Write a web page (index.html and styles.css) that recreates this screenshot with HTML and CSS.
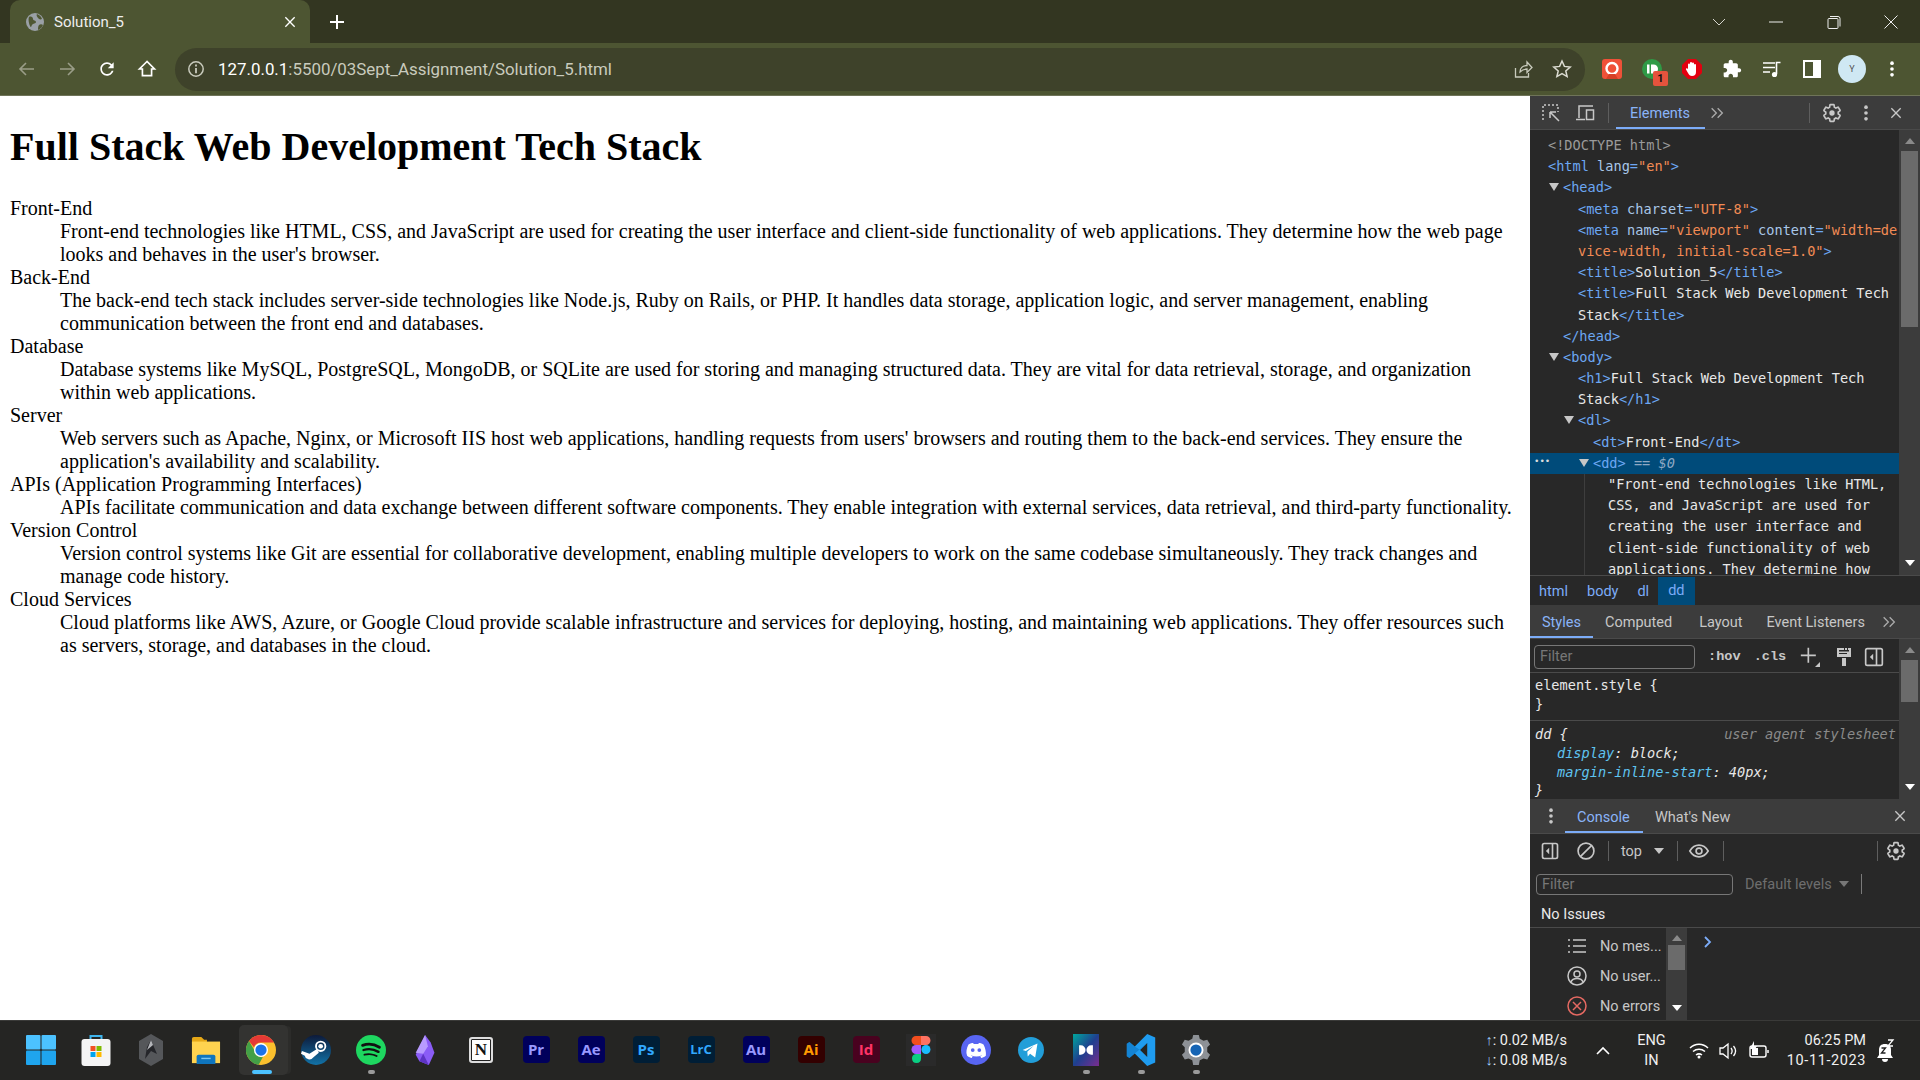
FILE: index.html
```html
<!doctype html>
<html lang="en">
<head>
<meta charset="utf-8">
<title>Solution_5</title>
<link rel="stylesheet" href="styles.css">
</head>
<body>
<svg class="defs" width="0" height="0">
	<symbol id="gear" viewBox="0 0 24 24"><path fill="none" stroke="currentColor" stroke-width="2" d="M19.43 12.98c.04-.32.07-.64.07-.98s-.03-.66-.07-.98l2.11-1.65c.19-.15.24-.42.12-.64l-2-3.46c-.12-.22-.39-.3-.61-.22l-2.49 1c-.52-.4-1.08-.73-1.69-.98l-.38-2.65C14.46 2.18 14.25 2 14 2h-4c-.25 0-.46.18-.49.42l-.38 2.65c-.61.25-1.17.59-1.69.98l-2.49-1c-.23-.09-.49 0-.61.22l-2 3.46c-.13.22-.07.49.12.64l2.11 1.65c-.04.32-.07.65-.07.98s.03.66.07.98l-2.11 1.65c-.19.15-.24.42-.12.64l2 3.46c.12.22.39.3.61.22l2.49-1c.52.4 1.08.73 1.69.98l.38 2.65c.03.24.24.42.49.42h4c.25 0 .46-.18.49-.42l.38-2.65c.61-.25 1.17-.59 1.69-.98l2.49 1c.23.09.49 0 .61-.22l2-3.46c.12-.22.07-.49-.12-.64l-2.11-1.65z"/><circle cx="12" cy="12" r="3.2" fill="currentColor"/></symbol>
	<symbol id="close" viewBox="0 0 24 24"><path fill="none" stroke="currentColor" stroke-width="2" d="M5 5l14 14M19 5L5 19"/></symbol>
	<symbol id="dots" viewBox="0 0 24 24"><g fill="currentColor"><circle cx="12" cy="5" r="2.2"/><circle cx="12" cy="12" r="2.2"/><circle cx="12" cy="19" r="2.2"/></g></symbol>
	<symbol id="more" viewBox="0 0 24 24"><path fill="none" stroke="currentColor" stroke-width="2" d="M4 5l7 7-7 7M13 5l7 7-7 7"/></symbol>
	<symbol id="dock" viewBox="0 0 24 24"><rect x="3" y="3" width="18" height="18" rx="2" fill="none" stroke="currentColor" stroke-width="2"/><path fill="none" stroke="currentColor" stroke-width="2" d="M15 3v18"/><path fill="currentColor" d="M11 8v8l-4-4z"/></symbol>
</svg>

<header class="tabstrip">
	<div class="tab">
		<svg class="favicon" viewBox="0 0 20 20"><circle cx="10" cy="10" r="9" fill="#9aa0a6"/><path fill="#4f5733" d="M4 5c2-1 4 0 4 2s3 1 3 3-3 1-4 3-1 3-2 1-2-7-1-9zM12 2c2 1 4 2 5 5-2 1-3 0-4-1s-2-3-1-4zM14 13c1-1 3-1 4 0-1 2-2 4-5 5 0-2 0-4 1-5z"/></svg>
		<span class="tab-title">Solution_5</span>
		<svg class="tab-close" viewBox="0 0 24 24"><use href="#close"/></svg>
	</div>
	<svg class="newtab" viewBox="0 0 20 20"><path fill="none" stroke="#fff" stroke-width="2" d="M10 3v14M3 10h14"/></svg>
	<div class="winctl">
		<span class="winbtn"><svg width="14" height="8" viewBox="0 0 14 8"><path fill="none" stroke="#d6d6ce" d="M1 1l6 6 6-6"/></svg></span>
		<span class="winbtn"><svg width="14" height="2" viewBox="0 0 14 2"><path stroke="#eee" d="M0 1h14"/></svg></span>
		<span class="winbtn"><svg width="14" height="14" viewBox="0 0 14 14"><path fill="none" stroke="#eee" d="M3 1.5h8a2 2 0 012 2v8M1 4.5a1 1 0 011-1h8a1 1 0 011 1v8a1 1 0 01-1 1H2a1 1 0 01-1-1z"/></svg></span>
		<span class="winbtn"><svg width="14" height="14" viewBox="0 0 14 14"><path fill="none" stroke="#eee" d="M.5.5l13 13M13.5.5l-13 13"/></svg></span>
	</div>
</header>

<nav class="toolbar">
	<span class="tbtn"><svg viewBox="0 0 20 20"><path fill="none" stroke="#9a9d88" stroke-width="1.6" d="M17 10H3M9 4l-6 6 6 6"/></svg></span>
	<span class="tbtn"><svg viewBox="0 0 20 20"><path fill="none" stroke="#9a9d88" stroke-width="1.6" d="M3 10h14M11 4l6 6-6 6"/></svg></span>
	<span class="tbtn"><svg viewBox="0 0 24 24"><path fill="#fff" d="M17.65 6.35C16.2 4.9 14.21 4 12 4c-4.42 0-7.99 3.58-7.99 8s3.57 8 7.99 8c3.73 0 6.84-2.55 7.73-6h-2.08c-.82 2.33-3.04 4-5.65 4-3.31 0-6-2.69-6-6s2.69-6 6-6c1.66 0 3.14.69 4.22 1.78L13 11h7V4l-2.35 2.35z"/></svg></span>
	<span class="tbtn"><svg viewBox="0 0 24 24"><path fill="none" stroke="#fff" stroke-width="2" d="M12 3L3 12h3.5v8h11v-8H21z"/></svg></span>
	<div class="omnibox">
		<svg class="info" viewBox="0 0 18 18"><circle cx="9" cy="9" r="7.2" fill="none" stroke="#c9cbbd" stroke-width="1.5"/><path stroke="#c9cbbd" stroke-width="1.8" d="M9 8v5.2M9 4.6v1.8"/></svg>
		<span class="url"><b>127.0.0.1</b>:5500/03Sept_Assignment/Solution_5.html</span>
		<span class="omni-btn"><svg viewBox="0 0 20 20"><path fill="none" stroke="#c9cbbd" stroke-width="1.3" d="M2.5 9v9h13v-4M7 13c0-4 3-6.500 7-6.500V3l5 5.500-5 5V10c-3 0-5 1-7 3z"/></svg></span>
		<span class="omni-btn"><svg viewBox="0 0 20 20"><path fill="none" stroke="#dcdcd2" stroke-width="1.5" d="M10 2l2.400 5.400 5.800.6-4.400 3.900 1.300 5.700L10 14.700 4.900 17.600l1.300-5.700L1.800 8l5.800-.6z"/></svg></span>
	</div>
	<span class="tbtn"><svg viewBox="0 0 20 20"><rect width="20" height="20" rx="3" fill="#ef5138"/><circle cx="10" cy="9.500" r="5.500" fill="none" stroke="#fff" stroke-width="2.400"/><path fill="#d63e25" d="M4 20l3-5h6l3 5z"/></svg></span>
	<span class="tbtn ext-badge"><svg viewBox="0 0 20 20"><circle cx="10" cy="10" r="10" fill="#2f9a46"/><rect x="5" y="5.500" width="2.500" height="9" fill="#fff"/><path fill="#fff" d="M9 5.500h2.500a4.500 4.500 0 010 9H9z"/></svg><span class="badge">1</span></span>
	<span class="tbtn"><svg viewBox="0 0 20 20"><path fill="#e2000f" d="M6 0h8l6 6v8l-6 6H6l-6-6V6z"/><path fill="#fff" d="M6 9V5.500a1 1 0 012 0V4a1 1 0 012 0v.5a1 1 0 012 0V6a1 1 0 012 0v7a4 4 0 01-4 4H10c-2 0-3-1-4-3L4 10.500c-.5-1 1-2 2-.5z"/></svg></span>
	<span class="tbtn"><svg viewBox="0 0 24 24"><path fill="#fff" d="M20.5 11H19V7c0-1.100-.9-2-2-2h-4V3.500C13 2.120 11.880 1 10.500 1S8 2.120 8 3.500V5H4c-1.100 0-1.990.9-1.990 2v3.800H3.500c1.490 0 2.700 1.210 2.700 2.700s-1.210 2.700-2.700 2.700H2V20c0 1.100.9 2 2 2h3.800v-1.500c0-1.490 1.210-2.700 2.700-2.700 1.490 0 2.700 1.210 2.700 2.700V22H17c1.100 0 2-.9 2-2v-4h1.500c1.380 0 2.500-1.120 2.500-2.500S21.880 11 20.500 11z"/></svg></span>
	<span class="tbtn"><svg viewBox="0 0 20 20"><path fill="none" stroke="#fff" stroke-width="1.600" d="M1 4h12M1 8.500h12M1 13h7"/><path fill="none" stroke="#fff" stroke-width="1.600" d="M14.500 15V3.500h4"/><circle cx="12.500" cy="15.500" r="2.600" fill="#fff"/></svg></span>
	<span class="tbtn"><svg viewBox="0 0 20 20"><rect x="2" y="2" width="16" height="16" fill="none" stroke="#fff" stroke-width="2"/><rect x="11" y="2" width="7" height="16" fill="#fff"/></svg></span>
	<span class="tbtn"><span class="avatar">Y</span></span>
	<span class="tbtn"><svg viewBox="0 0 24 24"><use href="#dots" color="#fff"/></svg></span>
</nav>

<div class="main">
	<main class="page">
		<h1>Full Stack Web Development Tech Stack</h1>
		<dl>
			<dt>Front-End</dt>
			<dd>Front-end technologies like HTML, CSS, and JavaScript are used for creating the user interface and client-side functionality of web applications. They determine how the web page looks and behaves in the user's browser.</dd>
			<dt>Back-End</dt>
			<dd>The back-end tech stack includes server-side technologies like Node.js, Ruby on Rails, or PHP. It handles data storage, application logic, and server management, enabling communication between the front end and databases.</dd>
			<dt>Database</dt>
			<dd>Database systems like MySQL, PostgreSQL, MongoDB, or SQLite are used for storing and managing structured data. They are vital for data retrieval, storage, and organization within web applications.</dd>
			<dt>Server</dt>
			<dd>Web servers such as Apache, Nginx, or Microsoft IIS host web applications, handling requests from users' browsers and routing them to the back-end services. They ensure the application's availability and scalability.</dd>
			<dt>APIs (Application Programming Interfaces)</dt>
			<dd>APIs facilitate communication and data exchange between different software components. They enable integration with external services, data retrieval, and third-party functionality.</dd>
			<dt>Version Control</dt>
			<dd>Version control systems like Git are essential for collaborative development, enabling multiple developers to work on the same codebase simultaneously. They track changes and manage code history.</dd>
			<dt>Cloud Services</dt>
			<dd>Cloud platforms like AWS, Azure, or Google Cloud provide scalable infrastructure and services for deploying, hosting, and maintaining web applications. They offer resources such as servers, storage, and databases in the cloud.</dd>
		</dl>
	</main>

	<aside class="devtools">
		<div class="dt-bar">
			<span class="dt-icon first"><svg viewBox="0 0 20 20"><path fill="none" stroke="#c7c7c7" stroke-width="1.500" stroke-dasharray="2 2" d="M2 17V2h15v7"/><path fill="none" stroke="#c7c7c7" stroke-width="1.500" d="M9 9h6M9 9v6M9 9l9 9"/></svg></span>
			<span class="dt-icon"><svg viewBox="0 0 20 20"><path fill="none" stroke="#c7c7c7" stroke-width="1.500" d="M4 15V3h14M1 16.500h9"/><rect x="11.500" y="7" width="7" height="9.500" fill="none" stroke="#c7c7c7" stroke-width="1.500"/></svg></span>
			<span class="dt-div"></span>
			<span class="dt-tab on elements-tab">Elements</span>
			<span class="dt-more"><svg viewBox="0 0 24 24"><use href="#more"/></svg></span>
			<span class="grow"></span>
			<span class="dt-div"></span>
			<span class="dt-icon"><svg viewBox="0 0 24 24"><use href="#gear"/></svg></span>
			<span class="dt-icon"><svg viewBox="0 0 24 24"><use href="#dots"/></svg></span>
			<span class="dt-icon narrow"><svg viewBox="0 0 24 24"><use href="#close"/></svg></span>
		</div>

		<div class="elements">
			<div class="tree">
				<div class="ln"><span class="gray">&lt;!DOCTYPE html&gt;</span></div>
				<div class="ln"><span class="tag">&lt;html</span> <span class="attr">lang</span><span class="tag">=</span><span class="val">"en"</span><span class="tag">&gt;</span></div>
				<div class="ln i1"><i class="tri"></i><span class="tag">&lt;head&gt;</span></div>
				<div class="ln i2"><span class="tag">&lt;meta</span> <span class="attr">charset</span><span class="tag">=</span><span class="val">"UTF-8"</span><span class="tag">&gt;</span></div>
				<div class="ln i2"><span class="tag">&lt;meta</span> <span class="attr">name</span><span class="tag">=</span><span class="val">"viewport"</span> <span class="attr">content</span><span class="tag">=</span><span class="val">"width=de</span></div>
				<div class="ln i2"><span class="val">vice-width, initial-scale=1.0"</span><span class="tag">&gt;</span></div>
				<div class="ln i2"><span class="tag">&lt;title&gt;</span>Solution_5<span class="tag">&lt;/title&gt;</span></div>
				<div class="ln i2"><span class="tag">&lt;title&gt;</span>Full Stack Web Development Tech</div>
				<div class="ln i2">Stack<span class="tag">&lt;/title&gt;</span></div>
				<div class="ln i1"><span class="tag">&lt;/head&gt;</span></div>
				<div class="ln i1"><i class="tri"></i><span class="tag">&lt;body&gt;</span></div>
				<div class="ln i2"><span class="tag">&lt;h1&gt;</span>Full Stack Web Development Tech</div>
				<div class="ln i2">Stack<span class="tag">&lt;/h1&gt;</span></div>
				<div class="ln i2"><i class="tri"></i><span class="tag">&lt;dl&gt;</span></div>
				<div class="ln i3"><span class="tag">&lt;dt&gt;</span>Front-End<span class="tag">&lt;/dt&gt;</span></div>
				<div class="ln i3 sel"><span class="ell">•••</span><i class="tri"></i><span class="tag">&lt;dd&gt;</span> <span class="eq">== <em>$0</em></span></div>
				<div class="guide">
					<div class="ln">"Front-end technologies like HTML,</div>
					<div class="ln">CSS, and JavaScript are used for</div>
					<div class="ln">creating the user interface and</div>
					<div class="ln">client-side functionality of web</div>
					<div class="ln">applications. They determine how</div>
				</div>
			</div>
			<div class="sb">
				<i class="up"></i>
				<i class="thumb thumb-el"></i>
				<i class="down"></i>
			</div>
		</div>

		<div class="crumbs">
			<span>html</span><span>body</span><span>dl</span><span class="crumb-on">dd</span>
		</div>

		<div class="dt-bar tabs2">
			<span class="dt-tab on styles-tab">Styles</span>
			<span class="dt-tab">Computed</span>
			<span class="dt-tab layout-tab">Layout</span>
			<span class="dt-tab">Event Listeners</span>
			<span class="dt-more"><svg viewBox="0 0 24 24"><use href="#more"/></svg></span>
		</div>

		<div class="styles">
			<div class="styles-body">
				<div class="filter-row">
					<span class="filter">Filter</span>
					<span class="pill-txt hov">:hov</span>
					<span class="pill-txt cls">.cls</span>
					<svg class="mini plus" viewBox="0 0 24 24"><path fill="none" stroke="currentColor" stroke-width="2" d="M10 1v18M1 10h18"/><path fill="currentColor" d="M24 18v6h-6z"/></svg>
					<svg class="mini paint" viewBox="0 0 20 20"><path fill="currentColor" d="M3 1h14v9H3zM8 11h4v8H8z"/><path fill="#282828" d="M5 3h10v1.500H5zM10 1h1v2h-1zM13 1h1v2h-1zM5 6h8v1H5z"/></svg>
					<svg class="mini" viewBox="0 0 24 24"><rect x="2" y="2" width="20" height="20" rx="2" fill="none" stroke="currentColor" stroke-width="2"/><path fill="none" stroke="currentColor" stroke-width="2" d="M15 2v20"/><path fill="currentColor" d="M11 8v8l-4-4z"/></svg>
				</div>
				<div class="rule first-rule">
					<div class="code">element.style {</div>
					<div class="code">}</div>
				</div>
				<div class="rule">
					<div class="code it ua-row"><span>dd {</span><span class="ua">user agent stylesheet</span></div>
					<div class="code it decl"><span class="prop">display</span>: block;</div>
					<div class="code it decl"><span class="prop">margin-inline-start</span>: 40px;</div>
					<div class="code it">}</div>
				</div>
			</div>
			<div class="sb">
				<i class="up"></i>
				<i class="thumb thumb-st"></i>
				<i class="down"></i>
			</div>
		</div>

		<div class="dt-bar console-bar">
			<span class="dt-icon drawer-dots"><svg viewBox="0 0 24 24"><use href="#dots"/></svg></span>
			<span class="dt-tab on console-tab">Console</span>
			<span class="dt-tab">What's New</span>
			<span class="grow"></span>
			<span class="dt-icon narrow"><svg viewBox="0 0 24 24"><use href="#close"/></svg></span>
		</div>

		<div class="con-tools">
			<svg class="con-ic" viewBox="0 0 24 24"><use href="#dock"/></svg>
			<svg class="con-ic" viewBox="0 0 24 24"><circle cx="12" cy="12" r="9.500" fill="none" stroke="currentColor" stroke-width="2"/><path stroke="currentColor" stroke-width="2" d="M5.500 18.500l13-13"/></svg>
			<span class="dt-div"></span>
			<span class="ctx">top</span><i class="down small"></i>
			<span class="dt-div after-ctx"></span>
			<svg class="con-ic eye" viewBox="0 0 24 24"><path fill="none" stroke="currentColor" stroke-width="2" d="M1 12c3-5 7-7 11-7s8 2 11 7c-3 5-7 7-11 7s-8-2-11-7z"/><circle cx="12" cy="12" r="3.500" fill="none" stroke="currentColor" stroke-width="2"/></svg>
			<span class="dt-div"></span>
			<span class="grow"></span>
			<span class="dt-div"></span>
			<svg class="con-ic gear-ic" viewBox="0 0 24 24"><use href="#gear"/></svg>
		</div>

		<div class="con-filter">
			<span class="filter wide">Filter</span>
			<span class="levels">Default levels</span><i class="down small dim"></i>
			<span class="dt-div bright"></span>
		</div>

		<div class="issues">No Issues</div>

		<div class="con-body">
			<div class="con-side">
				<div class="msg"><svg viewBox="0 0 20 20"><path fill="none" stroke="currentColor" stroke-width="1.600" d="M6 4h13M6 10h13M6 16h13"/><path stroke="currentColor" stroke-width="1.600" d="M1 4h2M1 10h2M1 16h2"/></svg><span>No mes...</span></div>
				<div class="msg"><svg viewBox="0 0 20 20"><circle cx="10" cy="10" r="9" fill="none" stroke="currentColor" stroke-width="1.500"/><circle cx="10" cy="8" r="3" fill="none" stroke="currentColor" stroke-width="1.500"/><path fill="none" stroke="currentColor" stroke-width="1.500" d="M4 16c1-3 3-3.500 6-3.500s5 .5 6 3.500"/></svg><span>No user...</span></div>
				<div class="msg"><svg viewBox="0 0 20 20"><circle cx="10" cy="10" r="9" fill="none" stroke="#e46962" stroke-width="1.500"/><path stroke="#e46962" stroke-width="1.500" d="M6 6l8 8M14 6l-8 8"/></svg><span>No errors</span></div>
			</div>
			<div class="sb">
				<i class="up"></i>
				<i class="thumb thumb-con"></i>
				<i class="down"></i>
			</div>
			<div class="prompt"><svg width="8" height="12" viewBox="0 0 8 12"><path fill="none" stroke="#7cacf8" stroke-width="1.800" d="M1 1l5 5-5 5"/></svg></div>
		</div>
	</aside>
</div>

<footer class="taskbar">
	<div class="tb-item"><svg class="app" viewBox="0 0 29 29"><g fill="#4cc2ff"><rect width="14" height="14" rx="1"/><rect x="15" width="14" height="14" rx="1"/></g><g fill="#1fa5ee"><rect y="15" width="14" height="14" rx="1"/><rect x="15" y="15" width="14" height="14" rx="1"/></g></svg></div>
	<div class="tb-item"><svg class="app" viewBox="0 0 29 32"><path fill="none" stroke="#3fb5ee" stroke-width="2" d="M9 8V2h11v6"/><rect y="5" width="29" height="27" rx="3" fill="#f4f4f4"/><rect x="9" y="12" width="5" height="5" fill="#f25022"/><rect x="15" y="12" width="5" height="5" fill="#7fba00"/><rect x="9" y="18" width="5" height="5" fill="#00a4ef"/><rect x="15" y="18" width="5" height="5" fill="#ffb900"/></svg></div>
	<div class="tb-item"><svg class="app" viewBox="0 0 26 32"><path fill="#55575a" d="M13 0l12 7v18l-12 7-12-7V7z"/><path fill="#25262a" d="M13 6l6 14-6-3-6 8 2-12z"/><path fill="#b4b6ba" d="M13 6l2 5-6 5z"/></svg></div>
	<div class="tb-item"><svg class="app" viewBox="0 0 32 32"><path fill="#e6a817" d="M1 4a2 2 0 012-2h8l3 3h3v4H1z"/><path fill="#ffd34f" d="M1 7h30v23H1z"/><path fill="#0f75bd" d="M6 23a2 2 0 012-2h16a2 2 0 012 2v8H6z"/><path stroke="#7cc6f2" stroke-width="1.500" d="M11 25h10"/></svg></div>
	<div class="tb-item chrome-item"><span class="hover-box"></span><svg class="app" viewBox="0 0 32 32"><circle cx="16" cy="16" r="16" fill="#fbc02d"/><path fill="#e53935" d="M16 0a16 16 0 0113.900 8H16a8 8 0 00-7.500 5L3.200 6.300A16 16 0 0116 0z"/><path fill="#43a047" d="M3.200 6.300L10 18a7 7 0 008 5.500L13.500 31.800A16 16 0 013.200 6.300z"/><circle cx="16" cy="16" r="7.500" fill="#fff"/><circle cx="16" cy="16" r="6" fill="#1a73e8"/></svg><i class="pip blue"></i></div>
	<div class="tb-item"><svg class="app" viewBox="0 0 32 32"><defs><linearGradient id="st" x1="0" y1="0" x2="0" y2="1"><stop offset="0" stop-color="#0d1a3a"/><stop offset="1" stop-color="#1273a8"/></linearGradient></defs><circle cx="16" cy="16" r="16" fill="url(#st)"/><circle cx="21" cy="12" r="5" fill="none" stroke="#fff" stroke-width="2"/><circle cx="21" cy="12" r="2.500" fill="#fff"/><path fill="#fff" d="M1 17l8 3 8-5 2 4-6 5a5 5 0 01-9-2l-4-2z"/></svg></div>
	<div class="tb-item"><svg class="app" viewBox="0 0 32 32"><circle cx="16" cy="16" r="16" fill="#1ed760"/><path fill="none" stroke="#111" stroke-linecap="round" stroke-width="3" d="M7 11c6-2 13-1 18 2"/><path fill="none" stroke="#111" stroke-linecap="round" stroke-width="2.500" d="M8 16c5-1.500 11-1 16 2"/><path fill="none" stroke="#111" stroke-linecap="round" stroke-width="2" d="M9 21c4-1 10-.5 13 1.500"/></svg><i class="pip"></i></div>
	<div class="tb-item"><svg class="app" viewBox="0 0 32 32"><path fill="#8a5cf6" d="M15 0l6 8 4 11-6 13-10-4-4-7z"/><path fill="#b89bff" d="M15 0l3 12-5 8-8-1z"/><path fill="#5d34c4" d="M13 20l6 12-10-4z"/></svg></div>
	<div class="tb-item"><span class="notion">N</span></div>
	<div class="tb-item"><span class="adobe pr">Pr</span></div>
	<div class="tb-item"><span class="adobe ae">Ae</span></div>
	<div class="tb-item"><span class="adobe ps">Ps</span></div>
	<div class="tb-item"><span class="adobe lrc">LrC</span></div>
	<div class="tb-item"><span class="adobe au">Au</span></div>
	<div class="tb-item"><span class="adobe ai">Ai</span></div>
	<div class="tb-item"><span class="adobe id">Id</span></div>
	<div class="tb-item"><svg class="app" viewBox="0 0 30 32"><rect width="30" height="32" fill="#2a2a2a"/><path fill="#f24e1e" d="M15 2H10a4.500 4.500 0 000 9h5z"/><path fill="#ff7262" d="M15 2h5a4.500 4.500 0 010 9h-5z"/><path fill="#a259ff" d="M15 11H10a4.500 4.500 0 000 9h5z"/><circle cx="20" cy="15.500" r="4.500" fill="#1abcfe"/><path fill="#0acf83" d="M10 20h5v4.500a4.500 4.500 0 11-5-4.500z"/></svg></div>
	<div class="tb-item"><svg class="app" viewBox="0 0 32 32"><circle cx="16" cy="16" r="16" fill="#5865f2"/><path fill="#fff" d="M8 10c2-1 4-1.500 5-1.500l.5 1h5l.5-1c1 0 3 .5 5 1.500 2 4 3 8 2.500 12-2 1.500-3.500 2-5 2.500l-1-2c1 0 1.500-.5 2-1-4 2-8 2-12 0 .5.500 1 1 2 1l-1 2c-1.500-.5-3-1-5-2.500C5 18 6 14 8 10z"/><circle cx="12.500" cy="16" r="2" fill="#5865f2"/><circle cx="19.500" cy="16" r="2" fill="#5865f2"/></svg></div>
	<div class="tb-item"><svg class="app small-app" viewBox="0 0 28 28"><circle cx="14" cy="14" r="14" fill="#229ed9"/><path fill="#fff" d="M5 14l16-7-2.500 15-5.500-4-2.500 3-.5-5 7-6.500-8.500 5.500z"/></svg></div>
	<div class="tb-item"><svg class="app" viewBox="0 0 30 37"><defs><linearGradient id="dl" x1="0" y1="0" x2="1" y2="1"><stop offset="0" stop-color="#00a79d"/><stop offset=".5" stop-color="#1f3f8f"/><stop offset="1" stop-color="#7a2d8f"/></linearGradient></defs><rect width="30" height="37" fill="url(#dl)"/><path fill="#fff" d="M7 13h2a5.500 5.500 0 010 11H7zM23 13h-2a5.500 5.500 0 000 11h2z"/></svg><i class="pip"></i></div>
	<div class="tb-item"><svg class="app" viewBox="0 0 32 36"><path fill="#1f9cf0" d="M23 0l9 4v28l-9 4-14-14-6 5-3-2V11l3-2 6 5zM23 10l-8 8 8 8z"/><path fill="#0a6cb8" d="M23 0v10l-8 8-6-4-6-5-3 2v14l3 2 20-17z" opacity=".5"/></svg><i class="pip"></i></div>
	<div class="tb-item"><svg class="app" viewBox="0 0 32 32"><path fill="#8d9196" d="M13 0h6l1 4 4 2 4-1 3 5-3 3v5l3 3-3 5-4-1-4 2-1 5h-6l-1-5-4-2-4 1-3-5 3-3v-5L1 10l3-5 4 1 4-2z"/><circle cx="16" cy="16" r="8" fill="#fff"/><circle cx="16" cy="16" r="6" fill="#1665b5"/></svg><i class="pip"></i></div>

	<div class="tray">
		<div class="net"><div><span class="arrow">↑</span>: 0.02 MB/s</div><div><span class="arrow">↓</span>: 0.08 MB/s</div></div>
		<span class="tray-ic caret"><svg width="14" height="9" viewBox="0 0 14 9"><path fill="none" stroke="#fff" stroke-width="1.600" d="M1 8l6-6 6 6"/></svg></span>
		<div class="lang"><div>ENG</div><div>IN</div></div>
		<span class="tray-ic wifi"><svg width="20" height="17" viewBox="0 0 20 17"><g fill="none" stroke="#fff" stroke-width="1.500"><path d="M1 6c5-5 13-5 18 0M4 9.500c3.500-3 8.500-3 12 0M7 13c2-1.500 4-1.500 6 0"/></g><circle cx="10" cy="15" r="1.500" fill="#fff"/></svg></span>
		<span class="tray-ic"><svg width="20" height="18" viewBox="0 0 20 18"><path fill="none" stroke="#fff" stroke-width="1.300" d="M1 6h3l5-4v14l-5-4H1z"/><path fill="none" stroke="#fff" stroke-width="1.300" d="M12 6c1.500 2 1.500 4 0 6M14.500 4c2.500 3 2.500 7 0 10"/></svg></span>
		<span class="tray-ic"><svg width="22" height="20" viewBox="0 0 22 20"><rect x="2" y="5" width="16" height="11" rx="2" fill="none" stroke="#fff" stroke-width="1.400"/><rect x="4" y="7" width="6" height="7" fill="#fff"/><path stroke="#fff" stroke-width="1.500" d="M20 9v3"/><path fill="#fff" d="M6 0L2 8h3l-1 5 5-8H6z"/></svg></span>
		<div class="clock"><div>06:25 PM</div><div class="date">10-11-2023</div></div>
		<span class="tray-ic bell"><svg width="20" height="24" viewBox="0 0 20 24"><path fill="#fff" d="M10 5c-4 0-6 2-6 6v5l-2 3h16l-2-3v-5c0-4-2-6-6-6zM7 20a3 3 0 006 0z"/><path fill="none" stroke="#202020" stroke-width="1.300" d="M6.500 9h4L6.500 14h4"/><path fill="none" stroke="#fff" stroke-width="1.300" d="M13 1h5l-5 6h5"/></svg></span>
	</div>
</footer>
</body>
</html>
```
FILE: styles.css
```css
* {
	box-sizing: border-box;
}
html, body {
	margin: 0;
	height: 1080px;
	overflow: hidden;
}
body {
	display: flex;
	flex-direction: column;
	font-family: Roboto, "Noto Sans", sans-serif;
	background: #fff;
}
.defs {
	display: block;
	height: 0;
}
.grow {
	flex: 1;
}

/* chrome */
.tabstrip {
	height: 43px;
	flex: none;
	display: flex;
	align-items: center;
	padding-left: 10px;
	background: #333621;
}
.tab {
	width: 300px;
	height: 43px;
	display: flex;
	align-items: center;
	padding: 0 12px 0 15px;
	background: #4d5532;
	border-radius: 10px 10px 0 0;
	color: #eee;
	font-size: 15px;
}
.favicon {
	width: 20px;
	height: 20px;
}
.tab-title {
	margin-left: 9px;
	flex: 1;
}
.tab-close {
	width: 16px;
	height: 16px;
	color: #fff;
}
.newtab {
	width: 20px;
	height: 20px;
	margin-left: 17px;
}
.winctl {
	margin-left: auto;
	display: flex;
}
.winbtn {
	width: 57.5px;
	height: 36px;
	display: flex;
	align-items: center;
	justify-content: center;
}
.toolbar {
	height: 53px;
	flex: none;
	display: flex;
	align-items: center;
	padding: 0 8px 0 7px;
	background: #4d5532;
	border-bottom: 1px solid #6f7459;
}
.tbtn {
	position: relative;
	width: 40px;
	height: 40px;
	flex: none;
	display: flex;
	align-items: center;
	justify-content: center;
}
.tbtn svg {
	width: 20px;
	height: 20px;
}
.badge {
	position: absolute;
	left: 21px;
	top: 22px;
	width: 15px;
	height: 15px;
	border-radius: 2px;
	background: #e5533d;
	color: #111;
	font-size: 11px;
	font-weight: 700;
	line-height: 15px;
	text-align: center;
}
.avatar {
	width: 28px;
	height: 28px;
	border-radius: 50%;
	background: #cfe8f3;
	color: #555;
	font-size: 9px;
	line-height: 28px;
	text-align: center;
}
.omnibox {
	flex: 1;
	height: 43px;
	margin: 0 7px 0 8px;
	display: flex;
	align-items: center;
	padding-left: 12px;
	padding-right: 4px;
	border-radius: 22px;
	background: #3e422a;
}
.info {
	width: 18px;
	height: 18px;
}
.url {
	flex: 1;
	margin-left: 13px;
	color: #c9cbbd;
	font-size: 16.9px;
}
.url b {
	color: #fff;
	font-weight: 400;
}
.omni-btn {
	width: 39px;
	display: flex;
	justify-content: center;
}
.omni-btn svg {
	width: 20px;
	height: 20px;
}

/* page */
.main {
	flex: 1;
	min-height: 0;
	display: flex;
}
.page {
	width: 1530px;
	flex: none;
	overflow: hidden;
	padding: 0 10px;
	color: #000;
	font: 20px "Liberation Serif", serif;
}
.page h1 {
	margin: 26.8px 0;
	font-size: 40px;
}
.page dl {
	margin: 20px 0;
}
.page dd {
	margin-left: 50px;
}

/* devtools */
.devtools {
	flex: 1;
	min-width: 0;
	display: flex;
	flex-direction: column;
	background: #282828;
	color: #c7c7c7;
	font-size: 14.5px;
}
.dt-bar {
	height: 34px;
	flex: none;
	display: flex;
	align-items: stretch;
	background: #3c3c3c;
	border-bottom: 1px solid #4a4a4a;
}
.dt-icon {
	width: 34px;
	display: flex;
	align-items: center;
	justify-content: center;
	color: #c7c7c7;
}
.dt-icon svg {
	width: 20px;
	height: 20px;
}
.dt-icon.first {
	margin-left: 4px;
}
.dt-icon.narrow {
	width: 26px;
	margin-right: 11px;
}
.dt-icon.narrow svg {
	width: 16px;
	height: 16px;
}
.dt-div {
	width: 1px;
	height: 20px;
	flex: none;
	align-self: center;
	margin: 0 5px 0 6px;
	background: #5e5e5e;
}
.dt-tab {
	display: flex;
	align-items: center;
	padding: 2px 12px 0;
	color: #c7c7c7;
	white-space: nowrap;
}
.dt-tab.on {
	color: #8ab4f8;
	box-shadow: inset 0 -2px #7cacf8;
}
.elements-tab {
	width: 89px;
	margin-left: 2px;
	padding: 2px 14px 0;
}
.layout-tab {
	padding-left: 15px;
}
.dt-more {
	width: 24px;
	display: flex;
	align-items: center;
	justify-content: center;
	color: #aaa;
}
.dt-more svg {
	width: 16px;
	height: 16px;
}
.elements {
	height: 445px;
	flex: none;
	display: flex;
	overflow: hidden;
}
.tree {
	width: 369px;
	flex: none;
	padding-top: 5px;
	overflow: hidden;
	font: 13.6px/21.2px "DejaVu Sans Mono", monospace;
	color: #e8e8e8;
}
.ln {
	position: relative;
	height: 21.2px;
	padding-left: 18px;
	white-space: pre;
}
.ln.i1 {
	padding-left: 33px;
}
.ln.i2 {
	padding-left: 48px;
}
.ln.i3 {
	padding-left: 63px;
}
.guide {
	margin-left: 54px;
	border-left: 1px solid #3e3e3e;
}
.guide .ln {
	padding-left: 23px;
}
.tri {
	position: absolute;
	top: 6px;
	margin-left: -14px;
	border: 5px solid transparent;
	border-top: 8px solid #c7c7c7;
	border-bottom: 0;
}
.sel {
	background: #004b7a;
}
.ell {
	position: absolute;
	left: 4px;
	top: -2px;
	font-size: 9px;
	color: #ddd;
}
.eq {
	color: #8fa9c4;
}
.eq em {
	font-style: italic;
}
.gray {
	color: #9a9a9a;
}
.tag {
	color: #6ca7f3;
}
.attr {
	color: #a8c7e8;
}
.val {
	color: #f28b54;
}

/* scrollbars */
.sb {
	width: 21px;
	flex: none;
	display: flex;
	flex-direction: column;
	align-items: center;
	padding: 8px 0 9px;
	background: #3c3c3c;
}
.up, .down {
	width: 0;
	height: 0;
	flex: none;
	border: 5px solid transparent;
}
.up {
	border-top: 0;
	border-bottom: 6px solid #8a8a8a;
}
.down {
	margin-top: auto;
	border-bottom: 0;
	border-top: 6px solid #fff;
}
.down.small {
	margin: 0 0 0 12px;
	align-self: center;
	border-top-color: #c7c7c7;
}
.down.dim {
	margin-left: 7px;
	border-top-color: #777;
}
.thumb {
	width: 17px;
	flex: none;
	margin-top: 7px;
	background: #6b6b6b;
}
.thumb-el {
	height: 176px;
}
.thumb-st {
	height: 42px;
}
.thumb-con {
	height: 25px;
	margin-top: 4px;
}
.crumbs {
	height: 30px;
	flex: none;
	display: flex;
	align-items: center;
	padding: 1px 0 0 9px;
	gap: 19px;
	color: #7cacf8;
	border-top: 1px solid #4a4a4a;
}
.crumbs .crumb-on {
	margin-left: -10px;
	padding: 0 10px;
	line-height: 28px;
	background: #004b7a;
}
.tabs2 {
	height: 34px;
}
.styles-tab {
	width: 63px;
	padding-left: 12px;
}
.styles {
	height: 160px;
	flex: none;
	display: flex;
	overflow: hidden;
}
.styles-body {
	width: 369px;
	flex: none;
}
.filter-row {
	height: 34px;
	display: flex;
	align-items: center;
	padding: 2px 0 0 4px;
	border-bottom: 1px solid #4a4a4a;
}
.filter {
	width: 161px;
	height: 24px;
	padding-left: 5px;
	line-height: 22px;
	border: 1px solid #777;
	border-radius: 4px;
	color: #777;
}
.filter.wide {
	width: 197px;
	height: 21px;
	line-height: 19px;
}
.pill-txt {
	font: 700 13.6px "Liberation Mono", monospace;
	color: #c7c7c7;
}
.hov {
	margin-left: 13px;
}
.cls {
	margin-left: 13px;
}
.mini {
	width: 20px;
	height: 20px;
	margin-left: 10px;
	color: #c7c7c7;
}
.mini.plus {
	margin-left: 14px;
}
.mini.paint {
	margin-left: 14px;
}
.rule {
	padding: 3px 0 0 5px;
	border-bottom: 1px solid #4a4a4a;
	font: 13.6px/19px "DejaVu Sans Mono", monospace;
	color: #e8e8e8;
}
.first-rule {
	padding-top: 3px;
	height: 48px;
}
.rule:last-child {
	border: 0;
}
.it {
	font-style: italic;
}
.ua-row {
	display: flex;
	justify-content: space-between;
	padding-right: 3px;
	line-height: 20px;
}
.ua {
	color: #8a8a8a;
}
.decl {
	padding-left: 22px;
	line-height: 18.5px;
}
.prop {
	color: #5fc4f0;
}
.console-bar {
	height: 35px;
}
.console-bar .narrow {
	margin-right: 7px;
}
.drawer-dots {
	width: 35px;
	margin: 0 -3px 0 3px;
}
.console-tab {
	width: 78px;
	padding-left: 12px;
}
.con-tools {
	height: 34px;
	flex: none;
	display: flex;
	align-items: center;
	padding-left: 10px;
}
.con-ic {
	width: 20px;
	height: 20px;
	margin-right: 16px;
	color: #c7c7c7;
}
.con-tools .con-ic + .dt-div {
	margin-left: -4px;
}
.ctx {
	margin-left: 7px;
}
.dt-div.after-ctx {
	margin-left: 13px;
}
.eye {
	margin: 0 0 0 5px;
	width: 22px;
}
.con-tools .eye + .dt-div {
	margin-left: 13px;
}
.gear-ic {
	margin: 0 14px 0 3px;
}
.con-filter {
	height: 32px;
	flex: none;
	display: flex;
	align-items: center;
	padding-left: 6px;
}
.levels {
	margin-left: 12px;
	color: #6e6e6e;
}
.bright {
	background: #7a7a7a;
	margin-left: 12px;
}
.issues {
	height: 28px;
	flex: none;
	padding-left: 11px;
	line-height: 30px;
	color: #e8e8e8;
	border-bottom: 1px solid #4a4a4a;
}
.con-body {
	flex: 1;
	min-height: 0;
	display: flex;
}
.con-side {
	width: 136px;
	flex: none;
	padding-top: 3px;
}
.msg {
	height: 30px;
	display: flex;
	align-items: center;
	padding-left: 37px;
	white-space: nowrap;
}
.msg svg {
	width: 20px;
	height: 20px;
	flex: none;
	color: #c7c7c7;
}
.msg span {
	margin-left: 13px;
}
.con-body .sb {
	padding-top: 7px;
}
.prompt {
	padding: 7px 0 0 17px;
}

/* taskbar */
.taskbar {
	height: 60px;
	flex: none;
	display: flex;
	align-items: center;
	padding-left: 13.5px;
	background: #252523;
	border-top: 1px solid #3a3a38;
	color: #f0f0f0;
}
.tb-item {
	position: relative;
	width: 55px;
	height: 59px;
	flex: none;
	display: flex;
	align-items: center;
	justify-content: center;
	padding-bottom: 2px;
}
.app {
	position: relative;
	width: 30px;
	height: 32px;
}
.small-app {
	width: 26px;
	height: 26px;
}
.pip {
	position: absolute;
	left: 24px;
	bottom: 6px;
	width: 7px;
	height: 4px;
	border-radius: 2px;
	background: #9a9a9a;
}
.pip.blue {
	left: 18px;
	width: 20px;
	background: #4cc2ff;
}
.hover-box {
	position: absolute;
	left: 5px;
	top: 4px;
	width: 49px;
	height: 50px;
	border-radius: 5px;
	background: #333331;
	box-shadow: 4px 0 0 -1px #2c2c2a;
}
.adobe {
	width: 27px;
	height: 27px;
	border-radius: 4px;
	font: 700 15px/27px "Open Sans", sans-serif;
	text-align: center;
}
.pr, .au {
	background: #00005b;
	color: #9999ff;
}
.ae {
	background: #00005b;
	color: #9999ff;
}
.ps {
	background: #001e36;
	color: #31a8ff;
}
.lrc {
	background: #001e36;
	color: #31a8ff;
	font-size: 13px;
}
.ai {
	background: #330000;
	color: #ff9a00;
}
.id {
	background: #49021f;
	color: #ff3366;
}
.notion {
	width: 24px;
	height: 26px;
	border: 2px solid #ddd;
	border-radius: 3px;
	background: #fff;
	box-shadow: inset 0 0 0 1px #222;
	color: #111;
	font: 700 17px/22px "Liberation Serif", serif;
	text-align: center;
}
.tray {
	margin-left: auto;
	display: flex;
	align-items: center;
	padding-right: 23px;
	font-size: 14.5px;
	line-height: 20px;
}
.net {
	width: 102px;
}
.arrow {
	color: #9fd0ff;
}
.tray-ic {
	width: 28px;
	display: flex;
	justify-content: center;
}
.caret {
	width: 30px;
}
.lang {
	width: 48px;
	margin-left: 10px;
	text-align: center;
}
.wifi {
	margin-left: 9px;
}
.tray-ic + .tray-ic {
	margin-left: 2px;
}
.clock {
	width: 93.5px;
	text-align: right;
}
.date {
	letter-spacing: .6px;
}
.bell {
	width: 24px;
	margin-left: 7px;
}
```
